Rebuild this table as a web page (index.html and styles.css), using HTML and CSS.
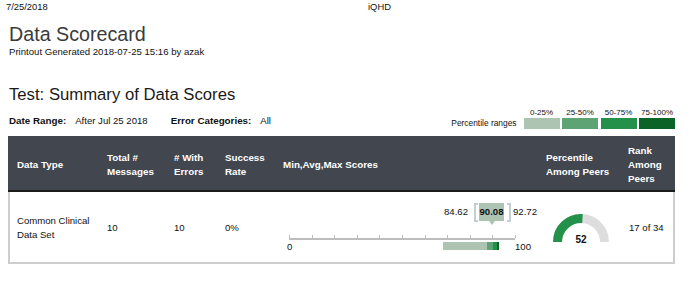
FILE: index.html
```html
<!DOCTYPE html>
<html lang="en">
<head>
<meta charset="utf-8">
<title>Data Scorecard</title>
<link rel="stylesheet" href="styles.css">
</head>
<body>
<div class="print-header">
  <span class="print-date">7/25/2018</span>
  <span class="print-title">iQHD</span>
</div>
<header class="page-head">
  <h1 class="page-title">Data Scorecard</h1>
  <p class="generated">Printout Generated 2018-07-25 15:16 by azak</p>
</header>
<section class="summary">
  <h2 class="summary-title">Test: Summary of Data Scores</h2>
  <div class="filters">
    <div class="filter-info">
      <span class="f-label">Date Range:</span><span class="f-value">After Jul 25 2018</span><span class="f-label">Error Categories:</span><span class="f-value">All</span>
    </div>
    <div class="legend">
      <span class="legend-title">Percentile ranges</span>
      <div class="legend-items">
        <div class="legend-item"><span class="legend-label">0-25%</span><span class="swatch q1"></span></div>
        <div class="legend-item"><span class="legend-label">25-50%</span><span class="swatch q2"></span></div>
        <div class="legend-item"><span class="legend-label">50-75%</span><span class="swatch q3"></span></div>
        <div class="legend-item"><span class="legend-label">75-100%</span><span class="swatch q4"></span></div>
      </div>
    </div>
  </div>
  <table class="scores">
    <colgroup>
      <col class="c-type"><col class="c-total"><col class="c-err"><col class="c-rate"><col class="c-chart"><col class="c-pct"><col class="c-rank">
    </colgroup>
    <thead>
      <tr>
        <th>Data Type</th>
        <th>Total #<br>Messages</th>
        <th># With<br>Errors</th>
        <th>Success<br>Rate</th>
        <th>Min,Avg,Max Scores</th>
        <th>Percentile<br>Among Peers</th>
        <th>Rank<br>Among<br>Peers</th>
      </tr>
    </thead>
    <tbody>
      <tr>
        <td class="first">Common Clinical<br>Data Set</td>
        <td>10</td>
        <td>10</td>
        <td>0%</td>
        <td class="chart-cell">
          <div class="chart">
            <div class="score-labels" style="left:161px">
              <span class="s-min">84.62</span>
              <span class="bracket open"></span>
              <span class="s-avg">90.08</span>
              <span class="bracket close"></span>
              <span class="s-max">92.72</span>
            </div>
            <div class="axis"></div>
            <div class="ticks"></div>
            <span class="axis-label lo">0</span>
            <span class="axis-label hi">100</span>
            <div class="dist" style="left:160px">
              <span class="seg q1" style="width:44px"></span><span class="seg q2" style="width:6px"></span><span class="seg q3" style="width:4px"></span><span class="seg q4" style="width:2px"></span>
            </div>
          </div>
        </td>
        <td class="gauge-cell">
          <svg class="gauge" width="58" height="30" viewBox="0 0 58 30">
            <path d="M5.5 29 A23.5 23.5 0 0 1 52.5 29" fill="none" stroke="#dddddd" stroke-width="9"/>
            <path d="M5.5 29 A23.5 23.5 0 0 1 30.48 5.55" fill="none" stroke="#23914a" stroke-width="9"/>
            <text x="29" y="29.5" text-anchor="middle" class="gauge-text">52</text>
          </svg>
        </td>
        <td class="last">17 of 34</td>
      </tr>
    </tbody>
  </table>
</section>
</body>
</html>
```

FILE: styles.css
```css
html, body {
  margin: 0;
  padding: 0;
  background: #ffffff;
}
body {
  width: 697px;
  height: 288px;
  overflow: hidden;
  font-family: "Liberation Sans", Arial, sans-serif;
  color: #111;
}

.print-header {
  display: grid;
  grid-template-columns: 362px auto;
  padding: 1px 0 0 6px;
  height: 11px;
  font-size: 9.4px;
  line-height: 11px;
  color: #111;
}

.page-head {
  padding-left: 9px;
}
.page-title {
  margin: 10px 0 0;
  font-size: 19.7px;
  line-height: 24px;
  font-weight: normal;
  color: #3a3a3a;
}
.generated {
  margin: 0;
  font-size: 9.6px;
  line-height: 12px;
}

.summary {
  margin-left: 8px;
  width: 667px;
}
.summary-title {
  margin: 27px 0 0 1px;
  font-size: 16.7px;
  line-height: 20px;
  font-weight: normal;
  color: #1a1a1a;
}

.filters {
  display: flex;
  justify-content: space-between;
  align-items: flex-end;
  margin-top: 3px;
  padding-left: 1px;
  height: 21px;
}
.filter-info {
  font-size: 9.6px;
  line-height: 12px;
  padding-bottom: 2px;
}
.f-label {
  font-weight: bold;
  font-size: 9.8px;
  margin-right: 9px;
}
.f-value {
  margin-right: 23px;
}

.legend {
  display: flex;
  align-items: flex-end;
}
.legend-title {
  font-size: 8.4px;
  line-height: 11px;
  margin-right: 7px;
}
.legend-items {
  display: flex;
  gap: 2.5px;
}
.legend-item {
  display: flex;
  flex-direction: column;
  align-items: center;
  width: 36px;
}
.legend-label {
  font-size: 8px;
  line-height: 10px;
}
.swatch {
  display: block;
  width: 36px;
  height: 11px;
}
.q1 { background: #adc4b3; }
.q2 { background: #5ea374; }
.q3 { background: #23914a; }
.q4 { background: #0b6327; }

.scores {
  margin-top: 7px;
  width: 667px;
  table-layout: fixed;
  border-collapse: separate;
  border-spacing: 0;
}
.c-type { width: 90px; }
.c-total { width: 67px; }
.c-err { width: 51px; }
.c-rate { width: 58px; }
.c-chart { width: 263px; }
.c-pct { width: 82px; }
.c-rank { width: 56px; }

.scores th {
  background: #41464f;
  color: #ffffff;
  font-size: 9.8px;
  font-weight: bold;
  line-height: 14px;
  text-align: left;
  vertical-align: middle;
  height: 51px;
  padding: 3px 0 0 9px;
  border-bottom: 2px solid #1c1c1c;
}

.scores td {
  height: 68px;
  padding: 2px 0 0 9px;
  font-size: 9.6px;
  line-height: 14px;
  vertical-align: middle;
  border-bottom: 2px solid #cdcdcd;
}
.scores td.first {
  border-left: 2px solid #cdcdcd;
  padding-left: 7px;
}
.scores td.last {
  border-right: 2px solid #cdcdcd;
  padding-left: 10px;
}
.scores td.chart-cell {
  padding: 0 0 0 9px;
  height: 70px;
}
.scores td.gauge-cell {
  padding: 2px 0 0 15px;
}

.chart {
  position: relative;
  width: 254px;
  height: 50px;
}
.score-labels {
  position: absolute;
  top: 1px;
  display: flex;
  align-items: center;
  height: 18px;
  font-size: 9.6px;
}
.s-min {
  width: 24px;
  margin-right: 6px;
  text-align: right;
}
.s-max {
  margin-left: 2px;
}
.bracket {
  display: block;
  width: 2px;
  height: 15px;
  border: 2px solid #c3d0d2;
}
.bracket.open {
  border-right: none;
  margin-right: 1px;
}
.bracket.close {
  border-left: none;
  margin-left: 3px;
}
.s-avg {
  position: relative;
  display: block;
  width: 25px;
  height: 18px;
  line-height: 18px;
  text-align: center;
  background: #adc4b3;
  font-weight: bold;
  font-size: 9.6px;
  color: #111;
}
.s-avg::after {
  content: "";
  position: absolute;
  left: 10px;
  top: 18px;
  border-left: 3px solid transparent;
  border-right: 3px solid transparent;
  border-top: 4px solid #adc4b3;
}

.axis {
  position: absolute;
  left: 6px;
  top: 36px;
  width: 226px;
  height: 2px;
  background: #bdbdbd;
}
.ticks {
  position: absolute;
  left: 6px;
  top: 33px;
  width: 227px;
  height: 3px;
  background: repeating-linear-gradient(to right, #bdbdbd 0 1px, transparent 1px 22.6px);
}
.axis-label {
  position: absolute;
  top: 39px;
  font-size: 9.6px;
  line-height: 12px;
}
.axis-label.lo { left: 4px; }
.axis-label.hi { left: 232px; }

.dist {
  position: absolute;
  top: 40px;
  display: flex;
  height: 8px;
}
.seg {
  display: block;
  height: 8px;
}

.gauge {
  display: block;
}
.gauge-text {
  font-family: "Liberation Sans", Arial, sans-serif;
  font-size: 10px;
  font-weight: bold;
  fill: #111;
}
```
